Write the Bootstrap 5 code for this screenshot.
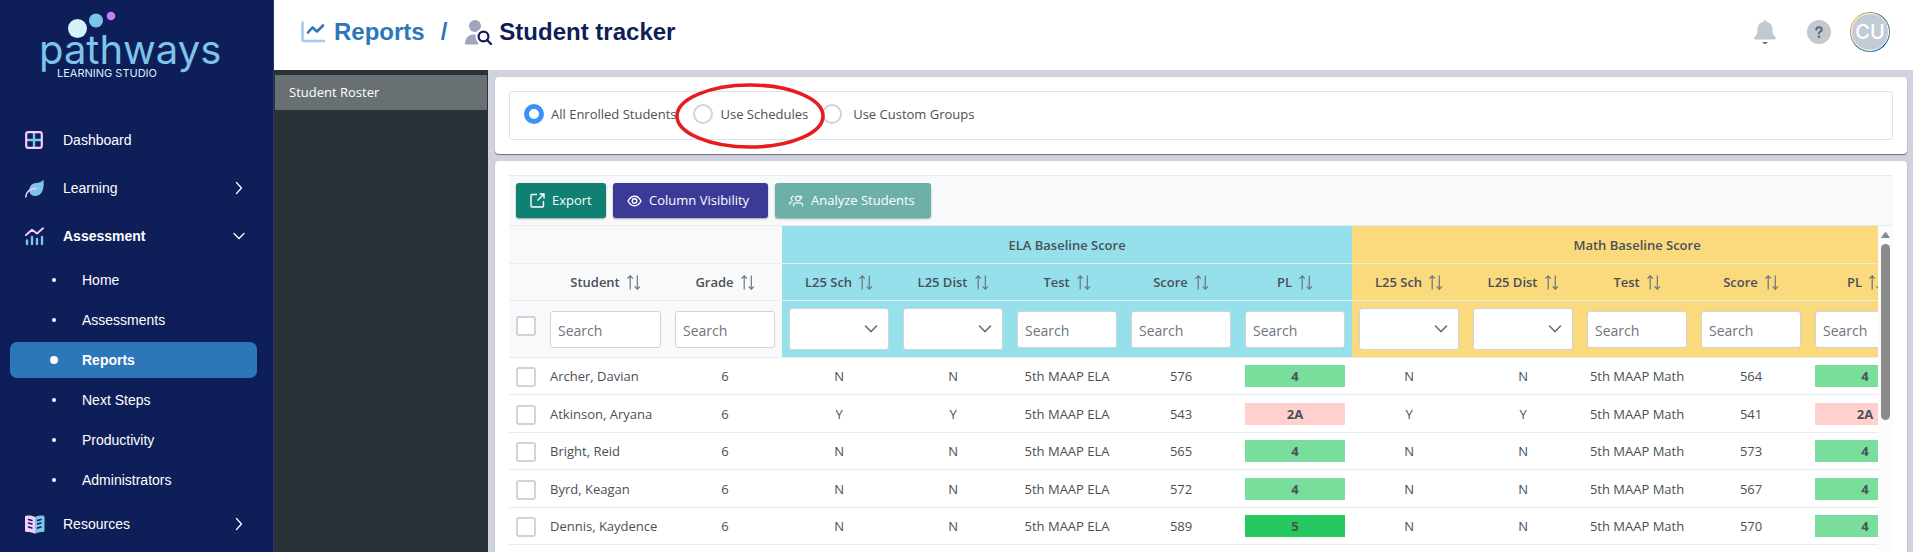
<!DOCTYPE html>
<html lang="en">
<head>
<meta charset="utf-8">
<meta name="viewport" content="width=device-width, initial-scale=1">
<title>Student tracker</title>
<link href="https://cdn.jsdelivr.net/npm/bootstrap@5.3.0/dist/css/bootstrap.min.css" rel="stylesheet">
<style>
  body { font-family: "Open Sans", "Noto Sans", sans-serif; font-size: 13px; color: #495057; background: #d0d2df; }
  a { text-decoration: none; }
  svg { display: block; flex: none; }

  .side { width: 274px; background: #0e1e58; border-right: 1px solid #2a3568; font: 14px/20px "Liberation Sans", Arial, sans-serif; }
  .brand { height: 116px; color: #7cc4ea; }
  .brand-word { left: 39px; top: 26px; font: 400 40px/48px Inter, sans-serif; }
  .brand-tag { left: 57px; top: 66px; font: 400 11px/14px Inter, sans-serif; color: #d5f0fb; }
  .brand-dots { left: 66px; top: 10px; }
  .side a { color: #fff; }
  .side-link { height: 48px; padding: 0 28px 0 25px; gap: 18px; }
  .side-sub { height: 36px; margin: 2px 16px 2px 10px; padding-left: 40px; gap: 24px; border-radius: 7px; }
  .side-sub::before { content: ""; width: 4px; height: 4px; margin: 2px; border-radius: 50%; background: #fff; }
  .side-sub.active { background: #2e76ba; font-weight: 700; }
  .side-sub.active::before { width: 8px; height: 8px; margin: 0; }

  .topbar { height: 70px; padding: 0 23px 6px 27px; background: #fff; }
  .topbar h1 { font: 700 24px/30px "Liberation Sans", Arial, sans-serif; color: #0e1e58; }
  .topbar a { color: #2e76ba; }
  .crumb-sep { margin: 0 18px 0 16px; }
  .crumb-icon { margin-right: 6px; }
  .help { margin: 0 19px 0 31px; }
  .avatar { width: 40px; height: 40px; padding: 1px; border-radius: 50%; background: conic-gradient(#8a8c5a, #3b8080 90deg, #2463d0 130deg, #3b7f88 190deg, #a59a4c 260deg, #fbbc3c 315deg, #8a8c5a); }
  .avatar span { border: 1px solid #fff; border-radius: 50%; background: #c3ccd6; color: #fff; font: 500 20px/20px Inter, sans-serif; }

  .roster { width: 214px; background: #283238; padding: 5px 1px; }
  .roster a { display: block; padding: 0 14px; line-height: 35px; background: #697073; color: #fff; }

  .stage { padding: 7px 6px 0 7px; gap: 7px; }
  .panel { background: #fff; border-radius: 4px; padding: 14px; box-shadow: 0 1px 1px rgba(40, 35, 55, .6); }
  .panel.grow { border-radius: 4px 4px 0 0; padding-bottom: 0; }
  .modes { border: 1px solid #dee2e6; border-radius: 3px; padding: 12px 14px 15px; height: 49px; }
  .mode { gap: 7px; line-height: 20px; }
  .mode input { appearance: none; width: 20px; height: 20px; margin: 0; border: 2px solid #ced4da; border-radius: 50%; background: #fff; }
  .mode input:checked { border: 5px solid #3b91f5; }
  .mode span { padding-bottom: 1px; }
  .modes .mode:nth-child(2) { margin-left: 17px; }
  .modes .mode:nth-child(3) { margin-left: 14px; gap: 11px; }
  .callout-ring { left: 165px; top: -9px; }

  .tools { padding: 7px; gap: 7px; border-top: 1px solid #e9ecef; border-bottom: 1px solid #e9ecef; background: #f8f9fa; }
  .tool { height: 35px; padding: 0 14px; border: 0; border-radius: 3px; color: #fff; gap: 7px; box-shadow: 0 1px 2px rgba(0, 0, 0, .35); white-space: nowrap; }
  .tool-export { background: #0f8072; width: 90px; }
  .tool-cols { background: #3b3a97; width: 155px; }
  .tool-students { background: #6db0a9; width: 156px; }

  .grid { table-layout: fixed; border-collapse: separate; border-spacing: 0; width: 1413px; line-height: 22px; text-align: center; }
  .grid th, .grid td { padding: 0 7px; border: 0; border-bottom: 1px solid #e9ecef; white-space: nowrap; }
  .grid th { background: #f8f9fa; font-weight: 600; }
  .grid th.ela { background: #96e0ec; }
  .grid th.math { background: #fbda7d; }
  .grid thead tr { height: 37px; }
  .grid thead tr:first-child { height: 38px; }
  .grid thead tr:last-child { height: 57px; }
  .grid tbody tr { height: 37px; }
  .grid tbody tr:nth-child(even) { height: 38px; }
  .grid td:nth-child(2) { text-align: left; }
  .w-tick { width: 34px; } .w-name { width: 125px; } .w-col { width: 114px; }
  .sorter { gap: 7px; color: #6c757d; }
  .sorter b { font-weight: 600; color: #495057; }
  .tick { appearance: none; display: block; width: 20px; height: 20px; margin: 2px 0 0; border: 2px solid #ced4da; border-radius: 3px; background: #fff; }
  thead .tick { margin: 0 0 6px; }
  .seek { width: 100%; height: 37px; padding: 2px 7px 0; border: 1px solid #ced4da; border-radius: 3px; background: #fff; font-size: 14px; font-weight: 400; display: block; }
  .seek::placeholder { color: #6c757d; }
  .pick { appearance: none; width: 100%; height: 42px; border: 1px solid #ced4da; border-radius: 3px; display: block;
    background: #fff url("data:image/svg+xml,%3Csvg xmlns='http://www.w3.org/2000/svg' width='14' height='10' fill='none' stroke='%23667080' stroke-width='1.6' stroke-linecap='round'%3E%3Cpath d='M1.5 2 7 7.5 12.5 2'/%3E%3C/svg%3E") no-repeat right 10px center; }
  .lvl { font-weight: 700; height: 22px; }
  .lvl4 { background: #79de9b; } .lvl2 { background: #ffd0ce; } .lvl5 { background: #26c95f; }
  .rail { width: 15px; background: #fcfcfc; padding-top: 6px; gap: 6px; }
  .rail i { width: 9px; height: 176px; border-radius: 5px; background: #8b8b8b; }
</style>
</head>
<body>
<svg width="0" height="0" class="position-absolute" aria-hidden="true">
  <symbol id="sort" viewBox="0 0 14 15"><path d="M3.2 14.5V1M.5 3.6 3.2.8 5.9 3.6M10.3.5V14M7.6 11.4l2.7 2.8 2.7-2.8" fill="none" stroke="currentColor" stroke-width="1.2"/></symbol>
  <symbol id="right" viewBox="0 0 8 14"><path d="M1.5 1.5 6.5 7l-5 5.5" fill="none" stroke="#fff" stroke-width="1.3" stroke-linecap="round"/></symbol>
</svg>

<div class="d-flex vh-100 overflow-hidden">
  <nav class="side d-flex flex-column flex-shrink-0 overflow-hidden">
    <div class="brand position-relative flex-shrink-0">
      <svg class="brand-dots position-absolute" width="52" height="30"><circle cx="11.500" cy="18.500" r="9.500" fill="#d5f2fb"/><circle cx="30" cy="10.500" r="7" fill="#7cc4ea"/><circle cx="45" cy="6" r="4.300" fill="#c77bfb"/></svg>
      <span class="brand-word position-absolute">pathways</span>
      <span class="brand-tag position-absolute text-nowrap">LEARNING STUDIO</span>
    </div>
    <a href="#" class="side-link d-flex align-items-center flex-shrink-0">
      <svg width="20" height="18"><path d="M9 2v14M2 9h14" stroke="#7cc4ea" stroke-width="2.400"/><rect x="1.200" y="1.200" width="15.600" height="15.600" rx="2" fill="none" stroke="#f3cdfb" stroke-width="2.200"/></svg>
      <span>Dashboard</span></a>
    <a href="#" class="side-link d-flex align-items-center flex-shrink-0">
      <svg width="20" height="19"><path d="M18.300.5C19.500 6 18.800 17 10 17 6 17 4 14 4.300 10.500 4.700 6 8 4 12.500 3.700 15.500 3.500 17 2.500 18.300.5z" fill="#7cc4ea"/><path d="M.8 17.800C1.500 12.500 4.500 9.600 11 9.500" fill="none" stroke="#f3cdfb" stroke-width="1.600" stroke-linecap="round"/></svg>
      <span class="flex-grow-1">Learning</span><svg width="12" height="14"><use href="#right"/></svg></a>
    <a href="#" class="side-link d-flex align-items-center flex-shrink-0 fw-bold">
      <svg width="20" height="19"><path d="M1 8 7 2.800l5 3.700L18 1.300" fill="none" stroke="#f3cdfb" stroke-width="2" stroke-linecap="round" stroke-linejoin="round"/><path d="M2 13.500V17M7 10v7M12 12v5M17 10v7" stroke="#7cc4ea" stroke-width="2.400" stroke-linecap="round"/></svg>
      <span class="flex-grow-1">Assessment</span><svg width="12" height="8"><path d="M1 1.500 6 6.500l5-5" fill="none" stroke="#fff" stroke-width="1.300" stroke-linecap="round"/></svg></a>
    <a href="#" class="side-sub d-flex align-items-center flex-shrink-0">Home</a>
    <a href="#" class="side-sub d-flex align-items-center flex-shrink-0">Assessments</a>
    <a href="#" class="side-sub d-flex align-items-center flex-shrink-0 active">Reports</a>
    <a href="#" class="side-sub d-flex align-items-center flex-shrink-0">Next Steps</a>
    <a href="#" class="side-sub d-flex align-items-center flex-shrink-0">Productivity</a>
    <a href="#" class="side-sub d-flex align-items-center flex-shrink-0">Administrators</a>
    <a href="#" class="side-link d-flex align-items-center flex-shrink-0">
      <svg width="20" height="19"><path d="M10 2C7.500.7 4 .3 1.500.500Q0 .7 0 2v13.500Q0 17 1.500 17C5 17 8 17.500 10 18.700z" fill="#f3cdfb"/><path d="M10 2C12.500.7 16 .3 18 .500Q19.500.7 19.500 2v13.500Q19.500 17 18 17C15 17 12 17.500 10 18.700z" fill="#7cc4ea"/><path d="M3.500 4.500l3.500 1M3.500 8l3.500 1M3.500 12l3.500 1M16 4.500l-3.500 1M16 8l-3.500 1M16 12l-3.500 1" stroke="#0e1e58" stroke-width="1.400" stroke-linecap="round"/></svg>
      <span class="flex-grow-1">Resources</span><svg width="12" height="14"><use href="#right"/></svg></a>
  </nav>

  <div class="d-flex flex-column flex-grow-1 overflow-hidden">
    <header class="topbar d-flex align-items-center flex-shrink-0">
      <h1 class="d-flex align-items-center m-0 flex-grow-1 text-nowrap">
        <a href="#" class="d-flex align-items-center gap-2">
          <svg width="25" height="22"><path d="M1.500 1.500v17q0 1.500 1.500 1.500h20" fill="none" stroke="#a9c9e6" stroke-width="2.600" stroke-linecap="round"/><path d="m7 11.500 4.500-5 4.500 4 6-6" fill="none" stroke="#2e76ba" stroke-width="2.600" stroke-linecap="round" stroke-linejoin="round"/></svg>
          Reports</a>
        <a class="crumb-sep">/</a>
        <svg class="crumb-icon" width="28" height="25"><circle cx="10" cy="6" r="6" fill="#a0a5bf"/><path d="M0 24.500C0 18 3.500 14.500 8 14.500h4c2 0 6 2 8 10z" fill="#a0a5bf"/><circle cx="18.500" cy="16.500" r="8" fill="#fff"/><path d="M13 22h6l2 3h-8z" fill="#fff"/><circle cx="18.500" cy="16.500" r="4.900" fill="none" stroke="#0e1e58" stroke-width="2.200"/><path d="m22 20 4 4" stroke="#0e1e58" stroke-width="2.400" stroke-linecap="round"/></svg>
        Student tracker
      </h1>
      <div class="d-flex align-items-center">
        <button class="btn p-0 border-0" aria-label="Notifications"><svg width="22" height="24"><path d="M11 0q1.400 0 1.400 1.800C16.500 2.600 18.500 5.500 18.500 9.500c0 4 1 5.700 2.600 7.200 1.400 1.400.7 2.800-.9 2.800H1.800C.2 19.500-.5 18.100.9 16.700 2.500 15.200 3.500 13.500 3.500 9.500c0-4 2-6.900 6.100-7.700Q9.600 0 11 0z" fill="#c2c8cf"/><path d="M8.200 22h5.600Q13 24 11 24t-2.800-2z" fill="#64748b"/></svg></button>
        <button class="help btn p-0 border-0" aria-label="Help"><svg width="24" height="24"><circle cx="12" cy="12" r="12" fill="#c2c8cf"/><path d="M9.200 9.500Q9.500 7.200 12 7.200t2.800 2.200Q14.800 11 13 11.800q-1 .4-1 1.800" fill="none" stroke="#5d6878" stroke-width="2" stroke-linecap="round"/><circle cx="12" cy="16.800" r="1.300" fill="#5d6878"/></svg></button>
        <button class="avatar border-0 d-flex"><span class="w-100 h-100 d-flex align-items-center justify-content-center">CU</span></button>
      </div>
    </header>

    <div class="d-flex flex-grow-1 overflow-hidden">
      <aside class="roster flex-shrink-0"><a href="#">Student Roster</a></aside>

      <main class="stage d-flex flex-column flex-grow-1 overflow-hidden">
        <section class="panel flex-shrink-0">
          <div class="modes d-flex align-items-center position-relative">
            <label class="mode d-flex align-items-center text-nowrap"><input type="radio" name="mode" checked><span>All Enrolled Students</span></label>
            <label class="mode d-flex align-items-center text-nowrap"><input type="radio" name="mode"><span>Use Schedules</span></label>
            <label class="mode d-flex align-items-center text-nowrap"><input type="radio" name="mode"><span>Use Custom Groups</span></label>
            <svg class="callout-ring position-absolute pe-none" width="150" height="66"><ellipse cx="75" cy="33" rx="73" ry="31" fill="none" stroke="#e71c1c" stroke-width="3.600"/></svg>
          </div>
        </section>

        <section class="panel grow flex-grow-1 d-flex flex-column overflow-hidden">
          <div class="tools d-flex flex-shrink-0">
            <button class="tool tool-export d-flex align-items-center"><svg width="15" height="15" fill="none" stroke="#fff" stroke-width="1.400"><path d="M7 1.500H2Q1 1.500 1 2.500V13q0 1 1 1h10.500q1 0 1-1V8M9.500 1H14v4.500M14 1 7.500 7.500"/></svg>Export</button>
            <button class="tool tool-cols d-flex align-items-center"><svg width="15" height="12" fill="none" stroke="#fff" stroke-width="1.400"><path d="M1 6Q3.500 1.200 7.500 1.200T14 6Q11.500 10.800 7.500 10.800T1 6z"/><circle cx="7.500" cy="6" r="2.300"/></svg>Column Visibility</button>
            <button class="tool tool-students d-flex align-items-center"><svg width="15" height="12" fill="none" stroke="#e9f4f3" stroke-width="1.300"><circle cx="9" cy="3.500" r="2.400"/><path d="M4.600 11.500V10Q4.600 7.800 7 7.800h4.200q2.400 0 2.400 2.200v1.500M4.900 1.500Q2.200 1.300 2.200 3.600q0 1.700 1.600 2M.8 9.700V8.500Q.8 6.700 3.500 6.700M11 1.200q2 .3 1.900 2.300"/></svg>Analyze Students</button>
          </div>
          <div class="d-flex flex-grow-1 overflow-hidden">
            <div class="flex-grow-1 overflow-hidden">
              <table class="grid">
                <colgroup><col class="w-tick"><col class="w-name"><col class="w-col" span="11"></colgroup>
                <thead>
                  <tr><th colspan="3"></th><th colspan="5" class="ela">ELA Baseline Score</th><th colspan="5" class="math">Math Baseline Score</th></tr>
                  <tr>
                    <th></th>
                    <th><span class="sorter d-flex align-items-center justify-content-center"><b>Student</b><svg width="14" height="15"><use href="#sort"/></svg></span></th>
                    <th><span class="sorter d-flex align-items-center justify-content-center"><b>Grade</b><svg width="14" height="15"><use href="#sort"/></svg></span></th>
                    <th class="ela"><span class="sorter d-flex align-items-center justify-content-center"><b>L25 Sch</b><svg width="14" height="15"><use href="#sort"/></svg></span></th>
                    <th class="ela"><span class="sorter d-flex align-items-center justify-content-center"><b>L25 Dist</b><svg width="14" height="15"><use href="#sort"/></svg></span></th>
                    <th class="ela"><span class="sorter d-flex align-items-center justify-content-center"><b>Test</b><svg width="14" height="15"><use href="#sort"/></svg></span></th>
                    <th class="ela"><span class="sorter d-flex align-items-center justify-content-center"><b>Score</b><svg width="14" height="15"><use href="#sort"/></svg></span></th>
                    <th class="ela"><span class="sorter d-flex align-items-center justify-content-center"><b>PL</b><svg width="14" height="15"><use href="#sort"/></svg></span></th>
                    <th class="math"><span class="sorter d-flex align-items-center justify-content-center"><b>L25 Sch</b><svg width="14" height="15"><use href="#sort"/></svg></span></th>
                    <th class="math"><span class="sorter d-flex align-items-center justify-content-center"><b>L25 Dist</b><svg width="14" height="15"><use href="#sort"/></svg></span></th>
                    <th class="math"><span class="sorter d-flex align-items-center justify-content-center"><b>Test</b><svg width="14" height="15"><use href="#sort"/></svg></span></th>
                    <th class="math"><span class="sorter d-flex align-items-center justify-content-center"><b>Score</b><svg width="14" height="15"><use href="#sort"/></svg></span></th>
                    <th class="math"><span class="sorter d-flex align-items-center justify-content-center"><b>PL</b><svg width="14" height="15"><use href="#sort"/></svg></span></th>
                  </tr>
                  <tr>
                    <th><input type="checkbox" class="tick" aria-label="Select all"></th>
                    <th><input class="seek" placeholder="Search" aria-label="Student"></th>
                    <th><input class="seek" placeholder="Search" aria-label="Grade"></th>
                    <th class="ela"><select class="pick" aria-label="ELA L25 Sch"><option></option></select></th>
                    <th class="ela"><select class="pick" aria-label="ELA L25 Dist"><option></option></select></th>
                    <th class="ela"><input class="seek" placeholder="Search" aria-label="ELA Test"></th>
                    <th class="ela"><input class="seek" placeholder="Search" aria-label="ELA Score"></th>
                    <th class="ela"><input class="seek" placeholder="Search" aria-label="ELA PL"></th>
                    <th class="math"><select class="pick" aria-label="Math L25 Sch"><option></option></select></th>
                    <th class="math"><select class="pick" aria-label="Math L25 Dist"><option></option></select></th>
                    <th class="math"><input class="seek" placeholder="Search" aria-label="Math Test"></th>
                    <th class="math"><input class="seek" placeholder="Search" aria-label="Math Score"></th>
                    <th class="math"><input class="seek" placeholder="Search" aria-label="Math PL"></th>
                  </tr>
                </thead>
                <tbody>
                  <tr><td><input type="checkbox" class="tick" aria-label="Select Archer, Davian"></td><td>Archer, Davian</td><td>6</td><td>N</td><td>N</td><td>5th MAAP ELA</td><td>576</td><td><div class="lvl lvl4">4</div></td><td>N</td><td>N</td><td>5th MAAP Math</td><td>564</td><td><div class="lvl lvl4">4</div></td></tr>
                  <tr><td><input type="checkbox" class="tick" aria-label="Select Atkinson, Aryana"></td><td>Atkinson, Aryana</td><td>6</td><td>Y</td><td>Y</td><td>5th MAAP ELA</td><td>543</td><td><div class="lvl lvl2">2A</div></td><td>Y</td><td>Y</td><td>5th MAAP Math</td><td>541</td><td><div class="lvl lvl2">2A</div></td></tr>
                  <tr><td><input type="checkbox" class="tick" aria-label="Select Bright, Reid"></td><td>Bright, Reid</td><td>6</td><td>N</td><td>N</td><td>5th MAAP ELA</td><td>565</td><td><div class="lvl lvl4">4</div></td><td>N</td><td>N</td><td>5th MAAP Math</td><td>573</td><td><div class="lvl lvl4">4</div></td></tr>
                  <tr><td><input type="checkbox" class="tick" aria-label="Select Byrd, Keagan"></td><td>Byrd, Keagan</td><td>6</td><td>N</td><td>N</td><td>5th MAAP ELA</td><td>572</td><td><div class="lvl lvl4">4</div></td><td>N</td><td>N</td><td>5th MAAP Math</td><td>567</td><td><div class="lvl lvl4">4</div></td></tr>
                  <tr><td><input type="checkbox" class="tick" aria-label="Select Dennis, Kaydence"></td><td>Dennis, Kaydence</td><td>6</td><td>N</td><td>N</td><td>5th MAAP ELA</td><td>589</td><td><div class="lvl lvl5">5</div></td><td>N</td><td>N</td><td>5th MAAP Math</td><td>570</td><td><div class="lvl lvl4">4</div></td></tr>
                </tbody>
              </table>
            </div>
            <div class="rail d-flex flex-column align-items-center flex-shrink-0"><svg width="9" height="6"><path d="M0 6 3.500.8q1-1 2 0L9 6z" fill="#8b8b8b"/></svg><i></i></div>
          </div>
        </section>
      </main>
    </div>
  </div>
</div>
<script src="https://cdn.jsdelivr.net/npm/bootstrap@5.3.0/dist/js/bootstrap.bundle.min.js"></script>
</body>
</html>
